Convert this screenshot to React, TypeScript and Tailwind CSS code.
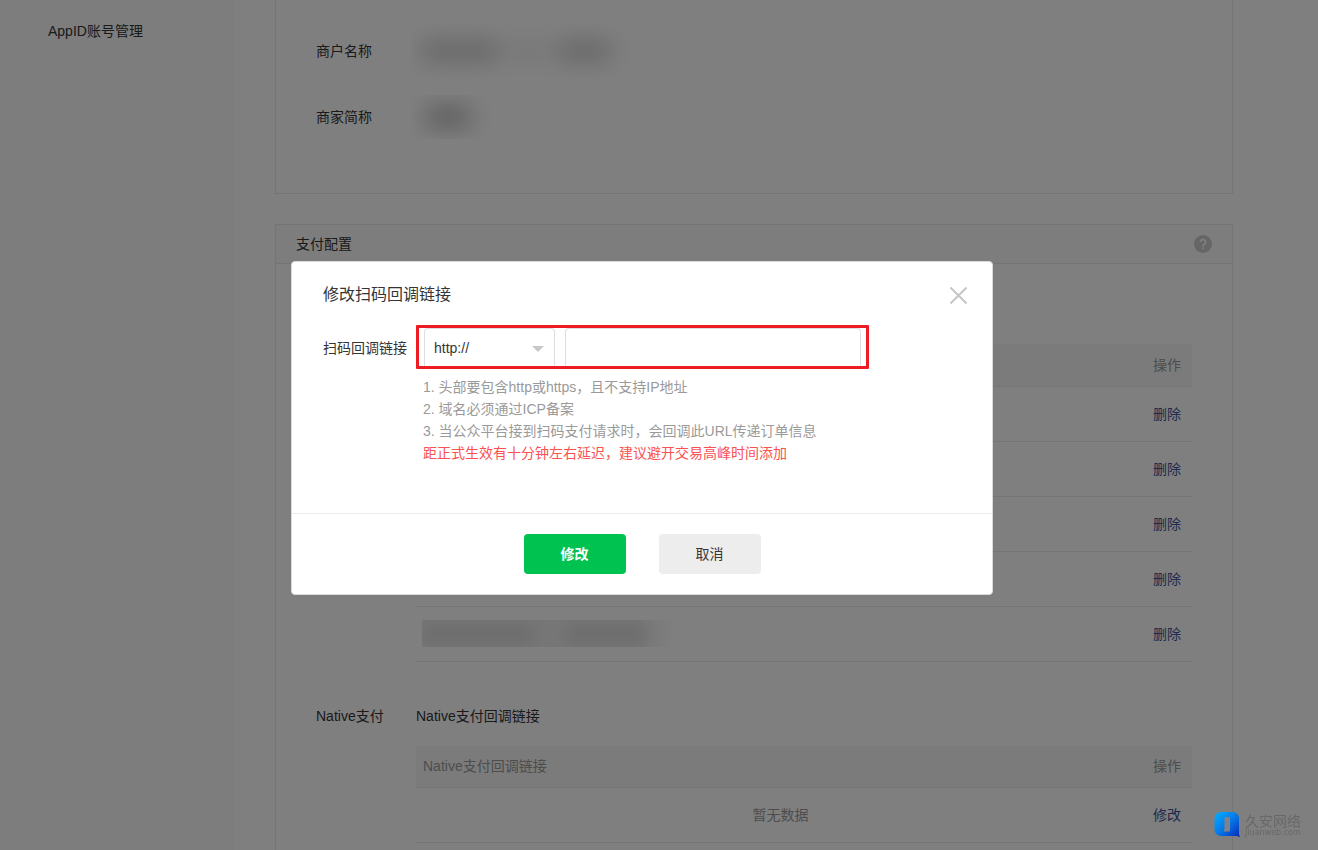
import { useState } from 'react'
import type { ReactNode } from 'react'

const hints = [
  '1. 头部要包含http或https，且不支持IP地址',
  '2. 域名必须通过ICP备案',
  '3. 当公众平台接到扫码支付请求时，会回调此URL传递订单信息',
]

// masked value: soft dark bars clipped to the box they sit in
function Masked({ className, bars }: { className: string; bars: string[] }) {
  return (
    <div className={`flex items-center overflow-hidden ${className}`} aria-hidden="true">
      {bars.map((bar, i) => (
        <span key={i} className={`block shrink-0 rounded-full ${bar}`} />
      ))}
    </div>
  )
}

function InfoRow({ label, children }: { label: string; children: ReactNode }) {
  return (
    <div className="flex h-[66px] items-center">
      <span className="w-24 shrink-0">{label}</span>
      {children}
    </div>
  )
}

function PayGroup({ name, title, children }: { name: string; title: string; children: ReactNode }) {
  return (
    <div className="flex">
      <h3 className="w-[100px] shrink-0">{name}</h3>
      <div className="min-w-0 flex-1">
        <p className="mb-[19px]">{title}</p>
        <table className="w-full table-fixed border-collapse text-left">
          <thead>
            <tr className="h-[42px] border-b border-[#ebebeb] bg-[#f7f7f7] text-[#9a9a9a]">
              <th className="pl-[7px] font-normal">{title}</th>
              <th className="w-[47px] pl-2 font-normal">操作</th>
            </tr>
          </thead>
          <tbody>{children}</tbody>
        </table>
      </div>
    </div>
  )
}

function Watermark() {
  return (
    <div className="pointer-events-none fixed right-[17px] bottom-3 z-30 flex items-center gap-1 text-[#686868]">
      <svg width="27" height="27" viewBox="0 0 27 27" aria-hidden="true">
        <defs>
          <linearGradient id="mark" x1="0" y1="0" x2="1" y2="1">
            <stop offset="0" stopColor="#02b0ff" />
            <stop offset="0.5" stopColor="#0878e8" />
            <stop offset="1" stopColor="#0428b8" />
          </linearGradient>
        </defs>
        <path
          d="M7 1h12a6 6 0 0 1 6 6v16.5l1 2.5-3.500-1H7a6.500 6.500 0 0 1-6.500-6.500V7.500A6.500 6.500 0 0 1 7 1Z"
          fill="url(#mark)"
        />
        <path d="M11 6h4a1 1 0 0 1 1 1v12.500a1 1 0 0 1-1 1h-5V19l.5-1V7Z" fill="#7f8389" />
      </svg>
      <div>
        <p className="font-['Liberation_Sans','Noto_Sans_CJK_SC',sans-serif] text-[14px] leading-4">久安网络</p>
        <p className="font-['DejaVu_Sans',sans-serif] text-[8px] leading-2">Jiuanweb.com</p>
      </div>
    </div>
  )
}

function CallbackDialog() {
  const [protocol, setProtocol] = useState('http://')
  const [url, setUrl] = useState('')

  return (
    <div
      role="dialog"
      aria-modal="true"
      aria-labelledby="dialog-title"
      className="w-[702px] rounded border border-[#d9dadc] bg-white"
    >
      <div className="flex items-center justify-between pt-[21px] pr-[25px] pl-[31px]">
        <h2 id="dialog-title" className="text-[16px] leading-6">修改扫码回调链接</h2>
        <button type="button" aria-label="关闭">
          <svg width="17" height="17" viewBox="0 0 17 17" fill="none" stroke="#c6c6c6" strokeWidth="2">
            <path d="M0.500 0.500 16.500 16.500M16.500 0.500 0.500 16.500" />
          </svg>
        </button>
      </div>

      <div className="mt-[18px] flex pl-[31px]">
        <label htmlFor="callback-url" className="mt-3 w-[93px] shrink-0">
          扫码回调链接
        </label>
        <div>
          <div className="flex gap-[10px] rounded-[1px] border-[3px] border-[#ed1c24] px-[5px]">
            <div className="relative">
              <select
                aria-label="协议"
                value={protocol}
                onChange={(e) => setProtocol(e.target.value)}
                className="block h-[38px] w-[131px] appearance-none rounded-t border border-b-0 border-[#dedede] bg-white pl-[9px]"
              >
                <option>http://</option>
                <option>https://</option>
              </select>
              <svg
                className="pointer-events-none absolute top-[18px] right-[11px]"
                width="12"
                height="6"
                viewBox="0 0 12 6"
                fill="#c8c8c8"
              >
                <path d="M0 0h12L6 6Z" />
              </svg>
            </div>
            <input
              id="callback-url"
              type="text"
              value={url}
              onChange={(e) => setUrl(e.target.value)}
              className="block h-[38px] w-[296px] rounded-t border border-b-0 border-[#dedede] px-[10px] outline-none"
            />
          </div>
          <div className="mt-[7px] pl-[7px] text-[#9a9a9a]">
            {hints.map((hint) => (
              <p key={hint}>{hint}</p>
            ))}
            <p className="text-[#fa5151]">距正式生效有十分钟左右延迟，建议避开交易高峰时间添加</p>
          </div>
        </div>
      </div>

      <div className="mt-[49px] flex justify-center gap-[33px] border-t border-[#ebebeb] py-5">
        <button type="button" className="h-10 w-[102px] rounded bg-[#00c250] font-bold text-white">
          修改
        </button>
        <button type="button" className="h-10 w-[102px] rounded bg-[#ededed]">
          取消
        </button>
      </div>
    </div>
  )
}

export default function App() {
  return (
    <div className="flex h-screen overflow-hidden bg-white font-['Liberation_Sans','Noto_Sans_CJK_SC',sans-serif] text-[14px] leading-[22px] text-[#353535]">
      <aside className="w-[235px] shrink-0 bg-[#fafafa] pt-5 pl-12">
        <a href="#appid">AppID账号管理</a>
      </aside>

      <main className="min-w-0 flex-1 pr-[85px] pl-10">
        <section className="border border-t-0 border-[#ebebeb] px-10 pt-[18px] pb-[43px]">
          <InfoRow label="商户名称">
            <Masked
              className="h-[56px] w-[230px] gap-3 pl-2"
              bars={['h-4 w-20 bg-black/25 blur-[12px]', 'h-4 w-8 bg-black/10 blur-[12px]', 'h-4 w-14 bg-black/25 blur-[12px]']}
            />
          </InfoRow>
          <InfoRow label="商家简称">
            <Masked className="h-[44px] w-[80px] pl-3" bars={['h-5 w-12 bg-black/30 blur-[12px]']} />
          </InfoRow>
        </section>

        <section className="mt-[30px] border border-[#ebebeb]">
          <header className="flex h-[39px] items-center justify-between border-b border-[#ebebeb] bg-[#fafafa] px-5">
            <h2>支付配置</h2>
            <button type="button" aria-label="帮助">
              <svg width="18" height="18" viewBox="0 0 18 18" fill="none">
                <circle cx="9" cy="9" r="9" fill="#ccc" />
                <path
                  d="M6.400 7a2.600 2.600 0 1 1 4.200 2.100C9.600 9.800 9 10.200 9 11.400"
                  stroke="#fff"
                  strokeWidth="1.700"
                />
                <path d="M8.100 12.500h1.800v1.800H8.100Z" fill="#fff" />
              </svg>
            </button>
          </header>

          <div className="flex flex-col gap-[43px] px-10 pt-[39px] pb-10">
            <PayGroup name="JSAPI支付" title="JSAPI支付授权目录">
              {[1, 2, 3, 4, 5].map((row) => (
                <tr key={row} className="h-[55px] border-b border-[#ebebeb]">
                  <td className="pl-[6px]">
                    <Masked
                      className="h-[27px] w-[254px] bg-linear-to-r from-black/7 from-85% to-transparent"
                      bars={['h-3 w-28 bg-black/12 blur-[8px]', 'ml-8 h-3 w-20 bg-black/12 blur-[8px]']}
                    />
                  </td>
                  <td className="pl-2">
                    <a href="#remove" className="text-[#40539a]">删除</a>
                  </td>
                </tr>
              ))}
            </PayGroup>

            <PayGroup name="Native支付" title="Native支付回调链接">
              <tr className="h-[55px] border-b border-[#ebebeb]">
                <td className="text-center text-[#9a9a9a]">暂无数据</td>
                <td className="pl-2">
                  <a href="#edit" className="text-[#40539a]">修改</a>
                </td>
              </tr>
            </PayGroup>
          </div>
        </section>
      </main>

      <div className="fixed inset-0 z-20 flex items-start justify-center bg-black/50 pt-[261px] pr-[34px]">
        <CallbackDialog />
      </div>

      <Watermark />
    </div>
  )
}
